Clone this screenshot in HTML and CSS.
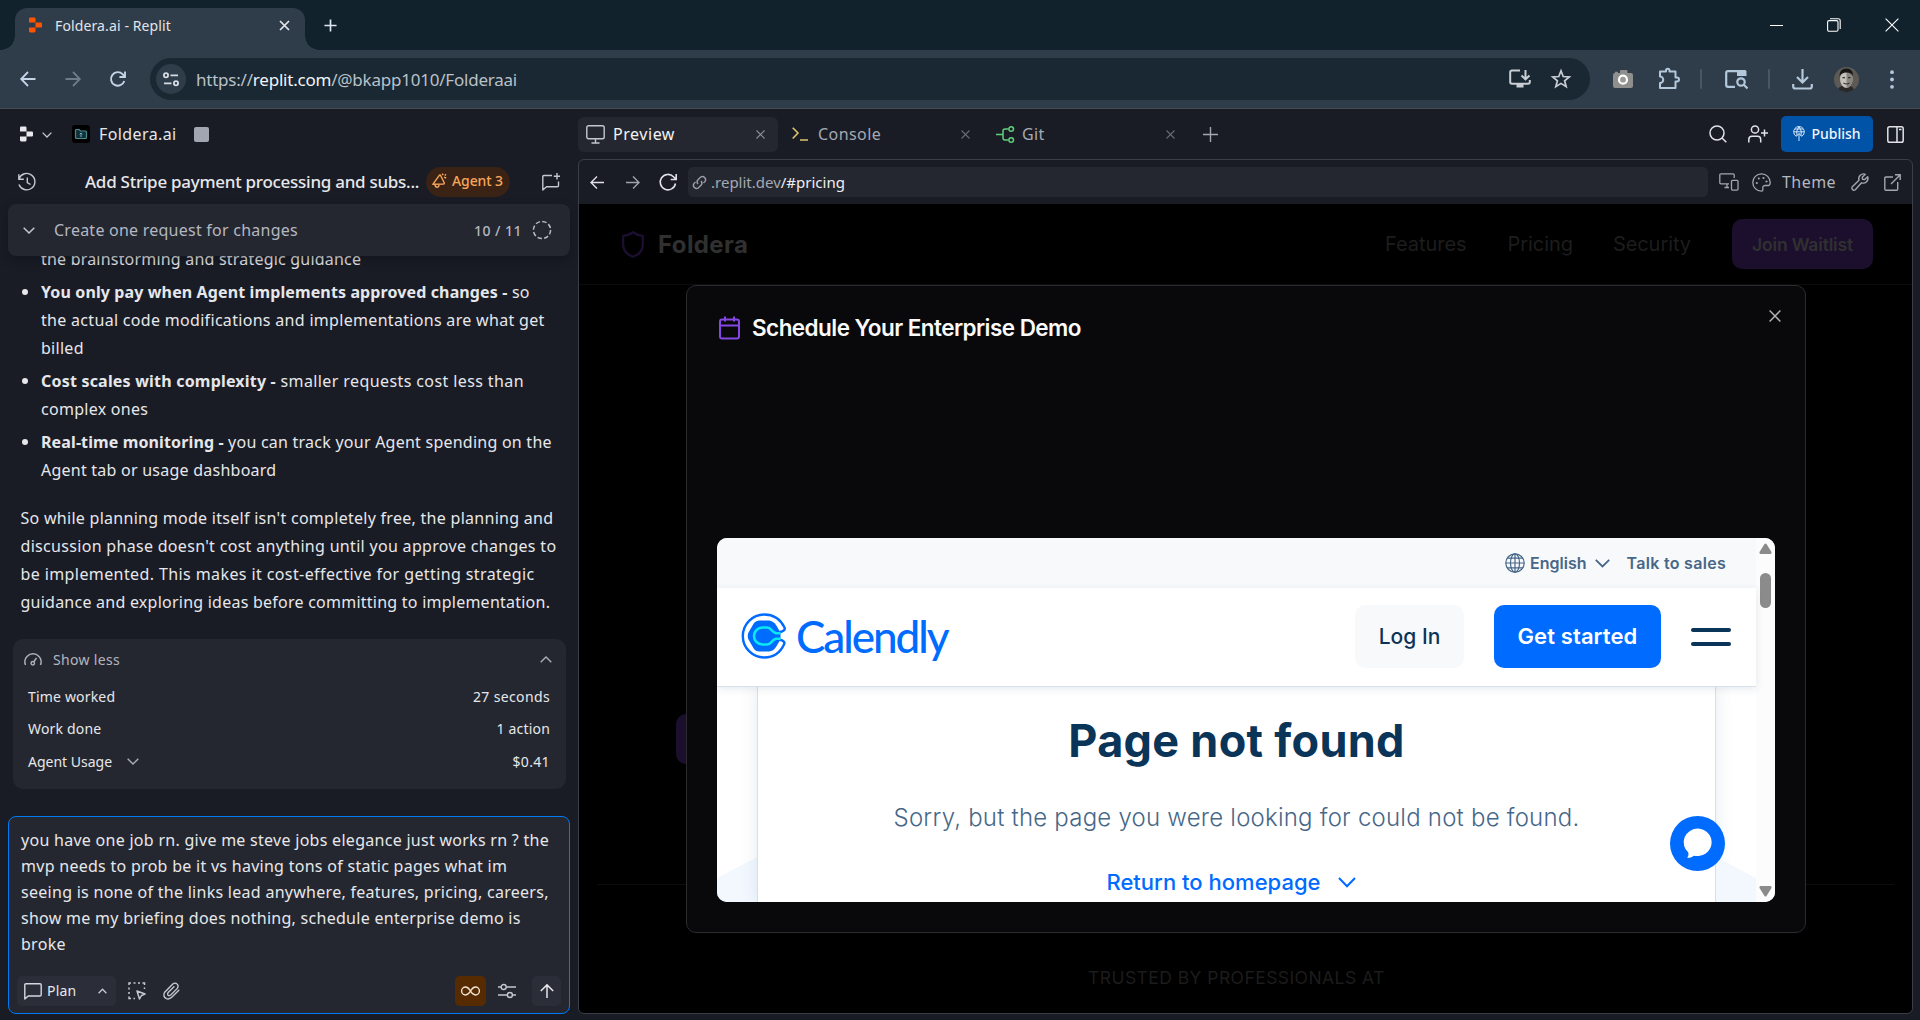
FILE: index.html
```html
<!DOCTYPE html>
<html lang="en">
<head>
<meta charset="utf-8">
<title>Foldera.ai - Replit</title>
<link rel="stylesheet" href="styles.css">
</head>
<body>
<header class="chrome">
  <div class="tabstrip">
    <div class="browser-tab">
      <svg class="i-fav" viewBox="0 0 14 16" fill="#fd5402"><path d="M0 1.2Q0 0 1.2 0H5.800Q7 0 7 1.200V5.300H0ZM7 5.300H12.800Q14 5.300 14 6.500V9.500Q14 10.700 12.800 10.700H7ZM0 10.700H7V14.800Q7 16 5.800 16H1.200Q0 16 0 14.800Z"/></svg>
      <span class="tab-title">Foldera.ai - Replit</span>
      <svg class="i-tabx" viewBox="0 0 11 11" stroke="#e3e6ea" stroke-width="1.7"><path d="M1 1L10 10M10 1L1 10"/></svg>
    </div>
    <svg class="i-newtab" viewBox="0 0 14 14" stroke="#dbe6f0" stroke-width="1.8"><path d="M7 .5V13.500M.5 7H13.500"/></svg>
    <div class="winctl">
      <svg width="14" height="14" viewBox="0 0 14 14" stroke="#fff"><path d="M0 7.500H13"/></svg>
      <svg width="14" height="14" viewBox="0 0 14 14" fill="none" stroke="#fff" stroke-width="1.1"><rect x=".6" y="2.600" width="10.400" height="10.600" rx="1.500"/><path d="M3 .8H11.200Q13.200 .8 13.200 2.800V11"/></svg>
      <svg width="14" height="14" viewBox="0 0 14 14" stroke="#fff" stroke-width="1.100"><path d="M.6 .6L13.400 13.400M13.400 .6L.6 13.400"/></svg>
    </div>
  </div>
  <div class="toolbar">
    <svg class="i-nav" viewBox="0 0 16 16" fill="none" stroke="#c3d4e6" stroke-width="1.800"><path d="M15.500 8H1.500M8 1L1.200 8L8 15"/></svg>
    <svg class="i-nav" viewBox="0 0 16 16" fill="none" stroke="#6e7c89" stroke-width="1.800"><path d="M.5 8H14.500M8 1L14.800 8L8 15"/></svg>
    <svg class="i-nav" viewBox="0 0 16 16" fill="none" stroke="#c3d4e6" stroke-width="1.900"><path d="M14.300 10A6.800 6.800 0 1 1 12.800 3.300L14.800 5.600M15 .4V6H9.400"/></svg>
    <div class="omnibox">
      <span class="siteinfo"><svg width="16" height="15" viewBox="0 0 16 15" fill="none" stroke="#d5dde4" stroke-width="1.800"><circle cx="3" cy="3.300" r="2.100"/><path d="M7.500 3.300H15M1 11.300H8.500"/><circle cx="13" cy="11.300" r="2.100"/></svg></span>
      <span class="url">https://<b>replit.com</b>/@bkapp1010/Folderaai</span>
      <svg class="i-install" viewBox="0 0 22 20" fill="none" stroke="#c9ced4" stroke-width="2"><path d="M11 1.500H3Q1.200 1.500 1.200 3.300V13Q1.200 14.800 3 14.800H19Q20.800 14.800 20.800 13V11M16.500 1V10M12.500 6.500L16.500 10.300L20.500 6.500"/><path d="M7.500 15V18.500H14.500V15" fill="#c9ced4" stroke="none"/></svg>
      <svg class="i-star" viewBox="0 0 20 20" fill="none" stroke="#c9ced4" stroke-width="1.700"><path d="M10 1.800L12.200 7.500L18.300 7.900L13.600 11.800L15.200 17.700L10 14.400L4.800 17.700L6.400 11.800L1.700 7.900L7.800 7.500Z"/></svg>
    </div>
    <div class="exts">
      <svg width="20" height="18" viewBox="0 0 20 18"><path d="M2 3Q0 3 0 5V16Q0 18 2 18H18Q20 18 20 16V5Q20 3 18 3H14.500V1Q14.500 0 13.500 0H8Q7 0 7 1V3H5V1.800H2Z" fill="#8f8f8d"/><circle cx="10" cy="9.700" r="4" fill="#9a9a98" stroke="#fff" stroke-width="2.200"/></svg>
      <svg class="i-puzzle" width="22" height="22" viewBox="0 0 22 22" fill="none" stroke="#b4c8dc" stroke-width="2" stroke-linejoin="round"><path d="M2 3.500H8V2.500A1.500 1.500 0 0 1 11.500 2.500V3.500H17.500V9.500H19A1.600 1.600 0 0 1 19 13.500H17.500V20H2V15A3 3 0 0 0 2 8.500Z"/></svg>
      <i class="div"></i>
      <svg class="i-tabsearch" width="24" height="20" viewBox="0 0 24 20" fill="none" stroke="#b4c8dc" stroke-width="2.200"><path d="M12 1.200H3Q1.200 1.200 1.200 3V15Q1.200 16.800 3 16.800H10"/><path d="M12 0H20Q21.500 0 21.500 1.500V6H12Z" fill="#b4c8dc" stroke="none"/><circle cx="16" cy="12" r="3.700"/><path d="M18.800 14.800L22.500 18.500"/></svg>
      <i class="div"></i>
      <svg class="i-dl" width="21" height="21" viewBox="0 0 21 21" fill="none" stroke="#b4c8dc" stroke-width="2.200"><path d="M10.500 0V13M5 8L10.500 13.500L16 8M1.200 15V17.500Q1.200 19.500 3.200 19.500H17.800Q19.800 19.500 19.800 17.500V15"/></svg>
      <svg class="i-avatar" width="25" height="25" viewBox="0 0 25 25"><circle cx="12.500" cy="12.500" r="12.500" fill="#5d5a56"/><path d="M4 22Q7 18 12 18Q18 18 20 22.500A12.500 12.500 0 0 1 4 22Z" fill="#2a2929"/><ellipse cx="12.300" cy="12" rx="6.300" ry="9" fill="#c4c1bd"/><path d="M12.500 3Q19.500 4 18.600 13Q17.500 20 12.500 21Z" fill="#89867f"/><path d="M5.500 10Q5 1.500 12.500 1.500Q19.500 1.500 19 10Q18 5.500 12.500 5.500Q7 5.500 5.500 10Z" fill="#161616"/><path d="M8.500 10.600H11M14 10.600H16.500M9.500 16Q12.500 18 15.500 16" stroke="#333" stroke-width="1.100" fill="none"/></svg>
      <svg class="i-dots" width="4" height="19" viewBox="0 0 4 19" fill="#b4c8dc"><circle cx="2" cy="2.200" r="1.900"/><circle cx="2" cy="9.500" r="1.900"/><circle cx="2" cy="16.800" r="1.900"/></svg>
    </div>
  </div>
</header>

<main class="app">
  <aside class="side">
    <div class="side-head">
      <svg class="i-replit" viewBox="0 0 14 16" fill="#e8e9ee"><path d="M0 1.200Q0 0 1.200 0H5.800Q7 0 7 1.200V5.300H0ZM7 5.300H12.800Q14 5.300 14 6.500V9.500Q14 10.700 12.800 10.700H7ZM0 10.700H7V14.800Q7 16 5.800 16H1.200Q0 16 0 14.800Z"/></svg>
      <svg class="i-chev9" viewBox="0 0 10 6" fill="none" stroke="#c2c8d0" stroke-width="1.300"><path d="M.6 .6L5 5L9.400 .6"/></svg>
      <svg class="i-app" viewBox="0 0 18 18"><rect width="18" height="18" rx="3" fill="#000"/><path d="M3.500 5Q3.500 4.500 4.500 4.500H7L8.500 6H13.500Q14.500 6 14.500 7V12.500Q14.500 13.500 13.500 13.500H4.500Q3.500 13.500 3.500 12.500Z" fill="#123036" stroke="#4c8a92" stroke-width="1.200"/><path d="M9 8V12M7.700 9.300L9 8L10.300 9.300" stroke="#67b3b8" fill="none"/></svg>
      <span class="proj">Foldera.ai</span>
      <i class="stop"></i>
    </div>
    <div class="side-title">
      <svg class="i-hist" viewBox="0 0 18 18" fill="none" stroke="#c2c8d0" stroke-width="1.400"><path d="M1 5.800A8.200 8.200 0 1 1 1 11.500M.8 1.200V6.200H5.800M9.300 4.500V9.500L12.500 11.500"/></svg>
      <span class="chat-title">Add Stripe payment processing and subs...</span>
      <span class="agent"><svg width="15" height="15" viewBox="0 0 15 15" fill="none" stroke="#f5a65b" stroke-width="1.400" stroke-linejoin="round"><path d="M.8 11.300L7.300 2.300Q8 1.600 8.600 2.500L12.200 9.800Q12.600 11 11.500 11.100ZM3 11.800Q3.300 14.300 5.300 14.200Q7 14 7 11.500M10.200 .6L11.200 2.200M12 4.200L14.200 5M14 1.200L12.800 2.500"/></svg>Agent 3</span>
      <svg class="i-newchat" viewBox="0 0 18 18" fill="none" stroke="#c2c8d0" stroke-width="1.400" stroke-linejoin="round"><path d="M10 2.500H2Q.8 2.500 .8 3.700V17L4.500 13.700H15.300Q16.500 13.700 16.500 12.500V8.500M15 0V6.500M11.800 3.200H18"/></svg>
    </div>
    <div class="task">
      <svg class="i-chev12" viewBox="0 0 12 7" fill="none" stroke="#c2c8d0" stroke-width="1.500"><path d="M.7 .7L6 6L11.300 .7"/></svg>
      <span class="task-name">Create one request for changes</span>
      <span class="task-n">10 / 11</span>
      <svg class="i-dash" viewBox="0 0 20 20" fill="none" stroke="#b6bac3" stroke-width="1.500"><circle cx="10" cy="10" r="8.600" stroke-dasharray="4.500 2.250"/></svg>
    </div>
    <div class="chat">
      <p class="li cont"><span>the brainstorming and strategic guidance</span></p>
      <p class="li dot"><span><b>You only pay when Agent implements approved changes -</b> so</span><span class="wide">the actual code modifications and implementations are what get</span><span>billed</span></p>
      <p class="li dot"><span class="wider"><b>Cost scales with complexity -</b> smaller requests cost less than</span><span>complex ones</span></p>
      <p class="li dot tight"><span><b>Real-time monitoring -</b> you can track your Agent spending on the</span><span>Agent tab or usage dashboard</span></p>
      <p class="para"><span>So while planning mode itself isn't completely free, the planning and</span><span class="wide">discussion phase doesn't cost anything until you approve changes to</span><span class="wider">be implemented. This makes it cost-effective for getting strategic</span><span class="tight">guidance and exploring ideas before committing to implementation.</span></p>
    </div>
    <section class="stats">
      <div class="stats-head">
        <svg width="18" height="13" viewBox="0 0 18 13" fill="none" stroke="#a9aeb8" stroke-width="1.500"><path d="M1.500 12A8 8 0 0 1 3 3.500Q5.500 .8 9 .8Q12.500 .8 15 3.500A8 8 0 0 1 16.500 12M9.800 8.800L12.500 5"/><circle cx="8.800" cy="10.300" r="1.700"/></svg>
        <span>Show less</span>
        <svg class="i-chev12 end" viewBox="0 0 12 7" fill="none" stroke="#a9aeb8" stroke-width="1.400"><path d="M.7 6.300L6 1L11.300 6.300"/></svg>
      </div>
      <div class="row"><span>Time worked</span><span class="secs">27 seconds</span></div>
      <div class="row"><span>Work done</span><span>1 action</span></div>
      <div class="row"><span><em>Agent Usage</em><svg class="i-chev12 usage" viewBox="0 0 12 7" fill="none" stroke="#a9aeb8" stroke-width="1.400"><path d="M.7 .7L6 6L11.300 .7"/></svg></span><span class="secs">$0.41</span></div>
    </section>
    <section class="prompt">
      <div class="prompt-text"><span>you have one job rn. give me steve jobs elegance just works rn ? the</span><span>mvp needs to prob be it vs having tons of static pages what im</span><span>seeing is none of the links lead anywhere, features, pricing, careers,</span><span>show me my briefing does nothing, schedule enterprise demo is</span><span>broke</span></div>
      <div class="prompt-bar">
        <span class="plan"><svg width="18" height="17" viewBox="0 0 18 17" fill="none" stroke="#d5d8de" stroke-width="1.400" stroke-linejoin="round"><path d="M.8 16V2Q.8 .8 2 .8H16Q17.200 .8 17.200 2V11.800Q17.200 13 16 13H4.200Z"/></svg><span class="plan-t">Plan</span><svg class="i-chev8" viewBox="0 0 9 6" fill="none" stroke="#c2c8d0" stroke-width="1.300"><path d="M.6 5.200L4.500 1.200L8.400 5.200"/></svg></span>
        <svg class="i-sel" viewBox="0 0 18 18" fill="none" stroke="#c2c8d0" stroke-width="1.500"><path d="M1 3V1H3M5.500 1H7.500M10 1H12M14.500 1H16.500V3M1 5.500V7.500M1 10V12M1 14.500V16.500H3M5.500 16.500H7M16.500 5.500V7"/><path d="M9 9L17 12L13.500 13.500L11.500 17Z" stroke-linejoin="round"/></svg>
        <svg class="i-clip" viewBox="0 0 17 18" fill="none" stroke="#c2c8d0" stroke-width="1.400" stroke-linecap="round"><path d="M15.800 8.200L9 15Q6.300 17.700 3.400 16.600Q-.5 14.500 1.500 10.500L8.800 3Q10.800 .3 13.400 1.500Q16.300 3.400 14.300 6.400L7.700 13Q6.200 14.200 5 13.200Q4 12 5.200 10.500L11 4.800"/></svg>
        <span class="inf"><svg width="19" height="10" viewBox="0 0 19 10" fill="none" stroke="#f4e3d2" stroke-width="1.400"><path d="M9.500 5C8 2.500 6.500 1 4.600 1A4 4 0 0 0 4.600 9C6.500 9 8 7.500 9.500 5C11 2.500 12.500 1 14.400 1A4 4 0 0 1 14.400 9C12.500 9 11 7.500 9.500 5Z"/></svg></span>
        <svg class="i-slide" viewBox="0 0 18 14" fill="none" stroke="#c2c8d0" stroke-width="1.400"><path d="M0 3H3M8.400 3H18M0 11H9.200M14.600 11H18"/><circle cx="5.700" cy="3" r="2.500"/><circle cx="11.900" cy="11" r="2.500"/></svg>
        <span class="send"><svg width="14" height="14" viewBox="0 0 14 14" fill="none" stroke="#e6e8ec" stroke-width="1.500"><path d="M7 14V1M.8 7L7 .9L13.200 7"/></svg></span>
      </div>
    </section>
  </aside>

  <section class="work">
    <div class="tabs">
      <div class="tab on"><svg width="19" height="19" viewBox="0 0 19 19" fill="none" stroke="#c2c8d0" stroke-width="1.400"><rect x=".8" y=".8" width="17.400" height="13" rx="1.800"/><path d="M9.500 14V18M5.500 18H13.500"/></svg><span>Preview</span><svg class="x" viewBox="0 0 9 9" stroke="#8b8f99" stroke-width="1.100"><path d="M.5 .5L8.500 8.500M8.500 .5L.5 8.500"/></svg></div>
      <div class="tab con"><svg width="16" height="14" viewBox="0 0 16 14" fill="none" stroke="#dcc46c" stroke-width="1.600"><path d="M.7 .7L6 6L.7 11.500M8 13H16"/></svg><span>Console</span><svg class="x" viewBox="0 0 9 9" stroke="#666a75" stroke-width="1.100"><path d="M.5 .5L8.500 8.500M8.500 .5L.5 8.500"/></svg></div>
      <div class="tab git"><svg width="19" height="17" viewBox="0 0 19 17" fill="none" stroke="#5fd07c" stroke-width="1.500"><path d="M0 8.500H7M12.500 3H9Q7 3 7 5V12Q7 14 9 14H12.500"/><circle cx="15.200" cy="3" r="2.300"/><circle cx="15.200" cy="14" r="2.300"/></svg><span>Git</span><svg class="x" viewBox="0 0 9 9" stroke="#666a75" stroke-width="1.100"><path d="M.5 .5L8.500 8.500M8.500 .5L.5 8.500"/></svg></div>
      <svg class="i-plus" viewBox="0 0 15 15" stroke="#a2a6b0" stroke-width="1.400"><path d="M7.500 0V15M0 7.500H15"/></svg>
      <div class="tools">
        <svg width="18" height="18" viewBox="0 0 18 18" fill="none" stroke="#e0e2e8" stroke-width="1.500"><circle cx="8" cy="8" r="7"/><path d="M13 13L17.300 17.300"/></svg>
        <svg width="20" height="18" viewBox="0 0 20 18" fill="none" stroke="#e0e2e8" stroke-width="1.500"><circle cx="7" cy="4.500" r="3.600"/><path d="M.8 17.500V14.500Q.8 11.300 4 11.300H9.500Q12.700 11.300 12.700 14.500V17.500M16.500 4.500V11.500M13 8H20"/></svg>
        <span class="publish"><svg width="12" height="15" viewBox="0 0 12 15" fill="none" stroke="#d5e6fb" stroke-width="1"><path d="M3.500 10.500A5.300 5.300 0 1 1 8.500 10.500M.8 5.800H11.200M4 10Q2.500 5 6 .6Q9.500 5 8 10M6 15V7.500M3.800 9.800L6 7.500L8.200 9.800M2 3H10"/></svg>Publish</span>
        <svg width="17" height="17" viewBox="0 0 17 17" fill="none" stroke="#e0e2e8" stroke-width="1.500"><rect x=".8" y=".8" width="15.400" height="15.400" rx="1.800"/><path d="M10 1V16M12 3.500H14.500"/></svg>
      </div>
    </div>
    <div class="pane">
      <div class="pane-bar">
        <svg width="14" height="13" viewBox="0 0 14 13" fill="none" stroke="#dfe1e7" stroke-width="1.400"><path d="M14 6.500H1M7 .5L1 6.500L7 12.500"/></svg>
        <svg class="i-fwd" width="14" height="13" viewBox="0 0 14 13" fill="none" stroke="#9ea2ac" stroke-width="1.400"><path d="M0 6.500H13M7 .5L13 6.500L7 12.500"/></svg>
        <svg class="i-rel" width="18" height="18" viewBox="0 0 18 18" fill="none" stroke="#dfe1e7" stroke-width="1.600"><path d="M16.500 10.500A7.700 7.700 0 1 1 14.500 3.800L17 6.200M17.200 1V6.500H11.700"/></svg>
        <div class="addr"><svg width="15" height="15" viewBox="0 0 15 15" fill="none" stroke="#9a9eaa" stroke-width="1.400"><path d="M6 9A3.200 3.200 0 0 1 6 4.700L8.700 2A3.200 3.200 0 0 1 13.100 6.400L11.500 8M9 6A3.200 3.200 0 0 1 9 10.300L6.300 13A3.200 3.200 0 0 1 1.900 8.600L3.500 7"/></svg><span>.replit.dev<b>/#pricing</b></span></div>
        <svg class="i-dev" width="20" height="18" viewBox="0 0 20 18" fill="none" stroke="#a2a6b0" stroke-width="1.300"><path d="M10 10.800H2Q.8 10.800 .8 9.600V2Q.8 .8 2 .8H14Q15.200 .8 15.200 2V5M8 11V14.500M5.500 14.500H10"/><rect x="12.500" y="7.300" width="6.500" height="9.800" rx="1"/></svg>
        <svg class="i-pal" width="19" height="19" viewBox="0 0 19 19" fill="none" stroke="#a2a6b0" stroke-width="1.300"><path d="M9.500 .8A8.700 8.700 0 0 0 9.500 18.200Q11.300 18 10.800 15.500Q10.300 12.800 13 12.500H16.500Q18.200 12.300 18.200 9.500A8.700 8.700 0 0 0 9.500 .8Z"/><g fill="#a2a6b0" stroke="none"><circle cx="4.800" cy="10" r="1.100"/><circle cx="6.800" cy="5.500" r="1.100"/><circle cx="11.500" cy="5" r="1.100"/><circle cx="14.500" cy="8.500" r="1.100"/></g></svg>
        <span class="theme">Theme</span>
        <svg class="i-wr" width="18" height="18" viewBox="0 0 18 18" fill="none" stroke="#a2a6b0" stroke-width="1.400" stroke-linejoin="round"><path d="M14.300 1.300A4.800 4.800 0 0 0 8 7.300L1.300 13.700Q.2 15.200 1.400 16.500Q2.800 17.800 4.300 16.700L10.500 9.800A4.800 4.800 0 0 0 16.700 3.700L13.700 6.600L11.500 6.300L11.300 4.200Z"/></svg>
        <svg width="17" height="17" viewBox="0 0 17 17" fill="none" stroke="#a2a6b0" stroke-width="1.400"><path d="M9 3H2Q.8 3 .8 4.200V15Q.8 16.200 2 16.200H12.500Q13.700 16.200 13.700 15V8M7 10L16 1M11 .8H16.200V6"/></svg>
      </div>
      <div class="page">
        <nav class="site-nav">
          <svg width="22" height="27" viewBox="0 0 22 27" fill="none" stroke="#1d0f33" stroke-width="2.200" stroke-linejoin="round"><path d="M11 1.200Q15 4.500 20.800 4.800V14Q20.800 22 11 25.800Q1.200 22 1.200 14V4.800Q7 4.500 11 1.200Z"/></svg>
          <span class="brand">Foldera</span>
          <span class="ln l1">Features</span><span class="ln l2">Pricing</span><span class="ln l3">Security</span>
          <span class="join">Join Waitlist</span>
        </nav>
        <div class="hero"><i class="hero-btn"></i></div>
        <div class="trusted">TRUSTED BY PROFESSIONALS AT</div>

        <div class="modal">
          <svg class="modal-x" viewBox="0 0 12 12" stroke="#b5b5b8" stroke-width="1.400"><path d="M.6 .6L11.400 11.400M11.400 .6L.6 11.400"/></svg>
          <h2 class="modal-title"><svg width="21" height="24" viewBox="0 0 21 24" fill="none" stroke="#8548e4" stroke-width="2"><rect x="1" y="3.500" width="19" height="19" rx="2"/><path d="M1 9.500H20M6 .5V5.500M15 .5V5.500"/></svg><span>Schedule Your Enterprise Demo</span></h2>
          <div class="frame">
            <div class="doc">
              <div class="c-top">
                <svg width="20" height="20" viewBox="0 0 20 20" fill="none" stroke="#476788" stroke-width="1.200"><circle cx="10" cy="10" r="9.200"/><ellipse cx="10" cy="10" rx="4.500" ry="9.200"/><path d="M10 .8V19.200M.8 10H19.200M2.300 5.200H17.700M2.300 14.800H17.700"/></svg>
                <span class="eng">English</span>
                <svg class="i-ce" viewBox="0 0 15 9" fill="none" stroke="#476788" stroke-width="1.800"><path d="M.8 .8L7.500 7.500L14.200 .8"/></svg>
                <span class="talk">Talk to sales</span>
              </div>
              <div class="c-nav">
                <svg width="45" height="46" viewBox="0 0 45 46"><g fill="none" stroke="#006bff" stroke-width="2.400"><path d="M42 31.500Q36 44.500 22.300 44.500A21.500 21.500 0 0 1 22.300 1.500Q36 1.500 42.500 14.500Q43.800 18 37.500 19.200M42 31.500Q43.800 28 37.500 26.800"/></g><path d="M17 7.500H27Q31.500 8 34 12L38.500 19.500V26.500L34 34Q31.500 38 27 38.500H17Q14 38.500 12 36L6.500 26.500Q5 23 6.500 19.500L12 10Q14 7.500 17 7.500Z" fill="#006bff"/><path d="M38.500 20.200H34Q31.500 19.500 29.500 17Q27.500 14.500 25 14.500H20.500A8.500 8.500 0 0 0 20.500 31.500H25Q27.500 31.500 29.500 29Q31.500 26.500 34 25.800H38.500" fill="none" stroke="#0ae8f0" stroke-width="2.600"/></svg>
                <span class="c-brand">Calendly</span>
                <span class="login">Log In</span>
                <span class="start">Get started</span>
                <span class="burger"><i></i><i></i></span>
              </div>
              <div class="c-body">
                <svg class="wedge" width="40" height="45" viewBox="0 0 40 45"><path d="M0 21L40 0V45H0Z" fill="#f3f8ff"/></svg>
                <div class="c-card">
                  <h1>Page not found</h1>
                  <p class="sorry">Sorry, but the page you were looking for could not be found.</p>
                  <p class="ret"><span>Return to homepage</span><svg width="18" height="11" viewBox="0 0 18 11" fill="none" stroke="#006bff" stroke-width="2"><path d="M1 1L9 9.200L17 1"/></svg></p>
                </div>
                <svg class="wedge" width="40" height="45" viewBox="0 0 40 45"><path d="M0 0L40 21V45H0Z" fill="#f3f8ff"/></svg>
                <span class="bubble"><svg width="30" height="31" viewBox="0 0 30 31" fill="#fff"><path d="M15 .5A14.300 13.800 0 1 1 11 27.700Q8 30 4.300 30Q6.200 27.500 5.300 24.500A14.300 13.800 0 0 1 15 .5Z"/></svg></span>
              </div>
            </div>
            <div class="scroll">
              <svg width="13" height="11" viewBox="0 0 13 11" fill="#8b8b8b"><path d="M5.500 1Q6.500 0 7.500 1L12.500 9Q12.800 10.800 11.500 11H1.500Q.2 10.800 .5 9Z"/></svg>
              <i class="thumb"></i>
              <svg class="down" width="13" height="11" viewBox="0 0 13 11" fill="#8b8b8b"><path d="M5.500 10Q6.500 11 7.500 10L12.500 2Q12.800 .2 11.500 0H1.500Q.2 .2 .5 2Z"/></svg>
            </div>
          </div>
        </div>
      </div>
    </div>
  </section>
</main>
</body>
</html>
```
FILE: styles.css
```css
*{box-sizing:border-box}
body{margin:0;width:1920px;height:1020px;overflow:hidden;background:#1a1c25;font-family:"Noto Sans","Open Sans",sans-serif;font-size:16px;color:#e6e7eb;white-space:nowrap}
svg{display:block;flex:none;overflow:visible}
p,h1,h2{margin:0;font-weight:400}
b{font-weight:inherit}
em{font-style:normal}

/* browser chrome */
.chrome{height:109px;background:#2f3c4a;border-bottom:1px solid #484b50}
.tabstrip{height:50px;background:#12222d;display:flex;align-items:center;padding-left:15px}
.browser-tab{position:relative;width:290px;height:42px;margin-top:8px;background:#2f3c4a;border-radius:12px 12px 0 0;display:flex;align-items:center;padding:0 15px 8px 14px}
.browser-tab::before,.browser-tab::after{content:"";position:absolute;bottom:0;width:14px;height:14px}
.browser-tab::before{left:-14px;background:radial-gradient(circle at 0 0,#12222d 13.500px,#2f3c4a 14px)}
.browser-tab::after{right:-14px;background:radial-gradient(circle at 100% 0,#12222d 13.500px,#2f3c4a 14px)}
.i-fav{width:13px;height:16px}
.tab-title{margin-left:13px;flex:1;font-size:14px;letter-spacing:.12px;color:#e1e5e9}
.i-tabx{width:11px;height:11px}
.i-newtab{width:13px;height:13px;margin-left:19px}
.winctl{margin-left:auto;display:flex;gap:43px;padding-right:21px}
.winctl svg:last-child{margin-left:1px}
.toolbar{height:58px;display:flex;align-items:center;padding-left:20px}
.i-nav{width:16px;height:16px;margin-right:29px}
.i-nav+.i-nav+.i-nav{margin-right:24px}
.omnibox{width:1440px;height:42px;border-radius:21px;background:#1a2833;display:flex;align-items:center;padding:0 19px 0 6px}
.siteinfo{width:30px;height:30px;border-radius:15px;background:#2f3c4a;display:grid;place-items:center}
.url{margin-left:10px;flex:1;font-size:17px;letter-spacing:-.22px;color:#b9c1c9}
.url b{color:#f2f4f6}
.i-install{width:22px;height:20px;margin-right:20px}
.i-star{width:20px;height:20px}
.exts{display:flex;align-items:center;margin-left:23px}
.div{width:2px;height:20px;background:#475766;border-radius:1px}
.i-puzzle{margin:0 20px 0 25px}
.i-tabsearch{margin:2px 19px 0 23px}
.i-dl{margin-left:22px}
.i-avatar{margin-left:21px}
.i-dots{margin-left:31px}

/* workspace */
.app{height:911px;display:flex}
.side{width:578px;display:flex;flex-direction:column}
.side-head{height:50px;display:flex;align-items:center;padding-left:20px}
.i-replit{width:13px;height:16px}
.i-chev9{width:10px;height:6px;margin:1px 0 0 9px}
.i-app{width:18px;height:18px;margin-left:20px}
.proj{margin-left:9px;letter-spacing:.4px;width:95px}
.stop{width:15px;height:15px;border-radius:2px;background:#a2a6b0}
.side-title{height:45px;display:flex;align-items:center;padding-left:18px}
.i-hist{width:18px;height:18px;margin-right:49px}
.chat-title{width:341px;font-size:17px;font-weight:500;letter-spacing:-.27px}
.agent{width:84px;height:30px;border-radius:15px;background:#3a2314;color:#f5a65b;display:flex;align-items:center;gap:5px;padding:0 0 2px 6px;font-size:14px;font-weight:500;letter-spacing:-.1px}
.i-newchat{width:18px;height:18px;margin-left:32px}
.task{position:relative;z-index:1;flex:none;width:562px;height:52px;margin-left:8px;border-radius:8px;background:#252730;display:flex;align-items:center;padding:0 18px 0 15px;color:#b3b7c0;box-shadow:0 4px 10px rgba(10,11,18,.35)}
.i-chev12{width:12px;height:7px}
.task-name{margin-left:19px;flex:1;letter-spacing:.24px}
.task-n{font-size:14px;font-weight:500;letter-spacing:.47px}
.i-dash{width:20px;height:20px;margin-left:10px}
.chat{margin-top:-11px;line-height:28px;letter-spacing:.28px}
.chat span{display:block}
.chat .wide{letter-spacing:.31px}
.chat .wider{letter-spacing:.4px}
.tight,.chat .tight{letter-spacing:.24px}
.li{position:relative;padding-left:41px;margin-bottom:5px}
.li.cont{letter-spacing:.2px}
.li b{font-weight:700;letter-spacing:.12px}
.wider b{letter-spacing:.2px}
.dot::before{content:"";position:absolute;left:22px;top:11px;width:6px;height:6px;border-radius:3px;background:#e6e7eb}
.para{padding-left:20.500px;margin-top:20px}
.stats{width:553px;height:150px;margin:23px 0 0 13px;border-radius:10px;background:#252730;padding:0 16px 11px 15px;font-size:14px}
.stats-head{height:41px;display:flex;align-items:center;margin-left:-4px;color:#b3b7c0}
.stats-head span{margin-left:11px;letter-spacing:.32px}
.end{margin-left:auto;margin-right:-2px}
.row{height:32.500px;display:flex;align-items:center;justify-content:space-between;letter-spacing:.18px}
.row span{display:flex;align-items:center}
.row em{letter-spacing:0}
.row .secs{letter-spacing:.36px}
.usage{margin-left:15px}
.prompt{width:562px;height:198px;margin:27px 0 0 8px;border:1px solid #0079f2;border-radius:8px;background:#252730;display:flex;flex-direction:column;justify-content:space-between;padding:9.500px 8px 7px}
.prompt-text{line-height:26.200px;letter-spacing:.28px;padding-left:4px}
.prompt-text span{display:block}
.prompt-bar{display:flex;align-items:center;height:30px}
.plan{width:99px;height:30px;border-radius:5px;background:#2b2d38;display:flex;align-items:center;padding:0 9px 0 7px;font-size:14px;letter-spacing:.2px}
.plan-t{margin-left:5px;padding-bottom:1px}
.i-chev8{width:9px;height:6px;margin-left:auto}
.i-sel{width:18px;height:18px;margin-left:12px}
.i-clip{width:17px;height:18px;margin-left:17px}
.inf{width:31px;height:30px;border-radius:5px;background:#572b02;display:grid;place-items:center;margin-left:auto}
.i-slide{width:18px;height:14px;margin:0 16px 0 12px}
.send{width:29px;height:30px;border-radius:5px;background:#2b2d38;display:grid;place-items:center}

.work{flex:1;display:flex;flex-direction:column;padding:0 7px 6px 0}
.tabs{height:50px;display:flex;align-items:center}
.tab{height:35px;display:flex;align-items:center;color:#a5a9b3}
.tab .x{width:9px;height:9px;margin-left:auto}
.on{width:200px;border-radius:6px;background:#252730;padding:0 13px 0 8px;color:#f2f3f5}
.on span{margin-left:8px;letter-spacing:.54px}
.con{width:205px;padding:0 13px 0 14px}
.con span{margin-left:10px;letter-spacing:.44px}
.git{width:205px;padding:0 13px 0 13px}
.git span{margin-left:7px;letter-spacing:.3px}
.i-plus{width:15px;height:15px;margin-left:15px}
.tools{margin-left:auto;display:flex;align-items:center;padding-right:9px}
.tools svg:nth-child(2){margin-left:21px}
.publish{width:92px;height:36px;margin:0 14px 0 13px;padding-bottom:1px;border-radius:5px;background:#0053a6;color:#f0f6fd;display:flex;align-items:center;justify-content:center;gap:6px;font-size:14px;font-weight:500}
.pane{flex:1;border:1px solid #3b3d49;border-radius:6px;overflow:hidden;display:flex;flex-direction:column}
.pane-bar{height:44px;display:flex;align-items:center;padding:0 11px}
.i-fwd{margin-left:22px}
.i-rel{margin-left:19px}
.addr{width:1020px;height:30px;margin-left:11px;border-radius:5px;background:#252730;display:flex;align-items:center;padding-left:4px;gap:4px;font-size:15px;color:#a5a9b3}
.addr span{padding-bottom:1px}
.addr b{color:#eeeff2}
.i-dev{margin-left:11px}
.i-pal{margin-left:13px}
.theme{margin:-1px 14px 0 11px;width:55px;color:#b3b7c0;letter-spacing:.44px}
.i-wr{margin-right:auto}

/* previewed site, dimmed behind the dialog */
.page{position:relative;flex:1;background:#000;font-family:Inter,"Liberation Sans",sans-serif}
.site-nav{height:81px;border-bottom:1px solid #0c0c0c;display:flex;align-items:center;padding:0 39px 0 43px}
.brand{margin-left:14px;font-size:24px;font-weight:700;letter-spacing:.4px;color:#303030}
.ln{font-size:20px;letter-spacing:-.06px;color:#1d1d1d}
.l1{margin-left:auto}.l2{margin-left:41px}.l3{margin-left:40px}
.join{width:141px;height:50px;margin-left:41px;border-radius:10px;background:#1b0f2d;color:#303030;font-size:17.500px;font-weight:600;letter-spacing:-.17px;display:grid;place-items:center}
.hero{height:600px;margin:0 18px;border-bottom:1px solid #0d0d0d;padding:429px 0 0 79px}
.hero-btn{display:block;width:190px;height:50px;border-radius:10px;background:#1b0f2d}
.trusted{margin:82px 0 0 509px;font-size:17.500px;letter-spacing:.44px;color:#1c1c1c}
.modal{position:absolute;left:107px;top:81px;width:1120px;height:648px;border:1px solid #2b2b30;border-radius:10px;background:#09090b;padding:30px 30px}
.modal-x{position:absolute;right:24px;top:24px;width:12px;height:12px}
.modal-title{height:24px;display:flex;align-items:center;padding-left:2px;font-size:22.500px;font-weight:600;letter-spacing:-.55px;color:#fafafa}
.modal-title span{margin:-1px 0 0 12px}
.frame{width:1058px;height:364px;margin-top:198px;border-radius:10px;overflow:hidden;background:#fff;display:flex;color:#0b3558}
.doc{width:1039px;display:flex;flex-direction:column}
.c-top{height:50px;background:#f8f9fb;display:flex;align-items:center;justify-content:flex-end;padding:0 30px 1px 0;font-size:16px;font-weight:600;color:#476788}
.eng{margin-left:5px}
.i-ce{width:15px;height:9px;margin:2px 17px 0 8px}
.talk{letter-spacing:.3px}
.c-nav{position:relative;z-index:1;height:99px;background:#fff;border-bottom:1px solid #d6e1ec;box-shadow:0 2px 8px rgba(11,53,88,.1);display:flex;align-items:center;padding:0 25px 2px 25px}
.c-brand{margin:0 auto 0 9px;font:500 44px/44px Lato,sans-serif;letter-spacing:-2.050px;color:#006bff}
.login{width:109px;height:63px;border-radius:10px;background:#f8f9fb;display:grid;place-items:center;font-size:21px;font-weight:500;letter-spacing:0}
.start{width:167px;height:63px;margin:0 30px;border-radius:10px;background:#006bff;color:#fff;display:grid;place-items:center;font-size:22px;font-weight:600;letter-spacing:.1px}
.burger{width:40px;display:grid;gap:10px;padding-top:1px}
.burger i{height:4px;border-radius:2px;background:#0b3558}
.c-body{position:relative;flex:1;display:flex;align-items:flex-end}
.c-card{width:959px;align-self:stretch;border:solid #d4e0ed;border-width:0 1px;box-shadow:0 0 16px rgba(71,103,136,.14);background:#fff;text-align:center}
.c-card h1{margin:25px 0 0 0;line-height:58px;font-size:45px;font-weight:700;letter-spacing:.3px;color:#0b3558}
.sorry{margin-top:32px;line-height:32px;font-size:24px;font-weight:300;letter-spacing:.22px;color:#476788}
.ret{display:flex;align-items:center;justify-content:center;gap:17px;margin:32px 0 0 -11px;line-height:32px;font-size:22px;font-weight:500;letter-spacing:.02px;color:#006bff}
.bubble{position:absolute;right:31px;top:129px;width:55px;height:55px;border-radius:50%;background:#006bff;display:grid;place-items:center}
.scroll{width:19px;background:#fcfcfc;display:flex;flex-direction:column;align-items:center;padding:5px 0 5px}
.thumb{width:11px;height:35px;margin-top:19px;border-radius:6px;background:#8b8b8b}
.down{margin-top:auto}
```
